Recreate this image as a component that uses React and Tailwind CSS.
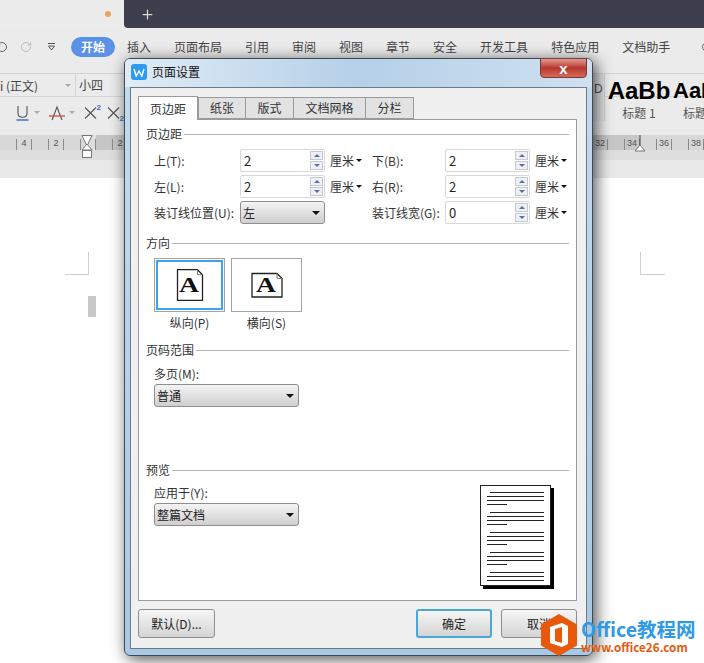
import { Plus, RotateCcw, RotateCw } from 'lucide-react'

const menus = ['插入', '页面布局', '引用', '审阅', '视图', '章节', '安全', '开发工具', '特色应用', '文档助手']

// one cell every 32px along the ruler, 16px to 704
const rulerLabels = ['4', '2', '', '2', '', '', '', '', '', '', '', '', '', '', '', '', '', '', '32', '34', '36', '38']

function Spinner({ value }) {
    return (
        <div className="flex h-[23px] w-[85px] items-center justify-between rounded-[2px] border border-[#d8d8d8] bg-white pl-[3px] pr-[1px] text-[13px] text-[#222]">
            <span>{value}</span>
            <div className="flex flex-col gap-px">
                <div className="flex h-[9px] w-[13px] items-center justify-center border border-[#c4c8d0] bg-[#eef0f4]">
                    <div className="h-0 w-0 border-x-[3px] border-b-[3px] border-x-transparent border-b-[#5a6ea8]" />
                </div>
                <div className="flex h-[9px] w-[13px] items-center justify-center border border-[#c4c8d0] bg-[#eef0f4]">
                    <div className="h-0 w-0 border-x-[3px] border-t-[3px] border-x-transparent border-t-[#5a6ea8]" />
                </div>
            </div>
        </div>
    )
}

function Unit() {
    return (
        <div className="ml-[5px] flex items-center gap-[2px] text-[12px] text-[#333]">
            厘米
            <div className="h-0 w-0 border-x-[3px] border-t-[3px] border-x-transparent border-t-[#111]" />
        </div>
    )
}

function Select({ label, width }) {
    return (
        <div className={`flex h-[23px] ${width} items-center justify-between rounded-[3px] border border-[#8e8e8e] bg-gradient-to-b from-[#f4f4f4] to-[#cfcfcf] pl-[2px] pr-[4px] text-[12px] text-[#222]`}>
            {label}
            <div className="h-0 w-0 border-x-[4px] border-t-[4px] border-x-transparent border-t-[#111]" />
        </div>
    )
}

function Group({ title, className }) {
    return (
        <div className={`flex items-center gap-[2px] text-[12px] leading-[14px] text-[#333] ${className}`}>
            {title}
            <div className="h-px flex-1 bg-[#b4b4b4]" />
        </div>
    )
}

function FormLabel({ children, className }) {
    return <div className={`whitespace-nowrap text-[12px] leading-[14px] text-[#333] ${className}`}>{children}</div>
}

function PageGlyph({ landscape }) {
    return (
        <svg width="32" height="32" viewBox="0 0 32 32" className="block">
            {landscape ? (
                <path d="M1 4.5H26L31 9.5V28H1Z" fill="#fff" stroke="#222" strokeWidth="1.3" />
            ) : (
                <path d="M3.5 0.7H23.5L28.5 5.7V31.3H3.5Z" fill="#fff" stroke="#222" strokeWidth="1.3" />
            )}
            <path d={landscape ? 'M26 4.5V9.5H31' : 'M23.5 0.7V5.7H28.5'} fill="none" stroke="#777" />
            <text
                x="15"
                y="23"
                textAnchor="middle"
                fontSize="20"
                fontWeight="700"
                fontFamily="Liberation Serif, serif"
                fill="#111"
                textLength="20"
                lengthAdjust="spacingAndGlyphs"
            >
                A
            </text>
        </svg>
    )
}

function PreviewPage() {
    const lines = [
        'ml-[3px]', '', '', 'w-[20px]', 'gap',
        'ml-[3px]', '', '', 'w-[20px]', 'gap',
        'ml-[3px]', '', '', 'w-[20px]', 'gap',
        'ml-[3px]', '', '', 'w-[20px]', 'gap',
        'ml-[3px]', '', '',
    ]
    return (
        <div className="flex h-[101px] w-[71px] flex-col gap-[3px] border border-[#222] bg-white px-[6px] pt-[6px] shadow-[3px_3px_0_#000]">
            {lines.map((l, i) =>
                l === 'gap' ? (
                    <div key={i} className="h-px" />
                ) : (
                    <div key={i} className={`h-px bg-[#222] ${l}`} />
                ),
            )}
        </div>
    )
}

function Ruler() {
    return (
        <div className="relative h-[25px] bg-[#dedede]">
            <div className="flex h-[15px]">
                <div className="w-[88px] bg-[#d8d8d8]" />
                <div className="w-[8px]" />
                <div className="w-[544px] bg-[#c6c6c6]" />
                <div className="flex-1 bg-[#d8d8d8]" />
            </div>
            <div className="absolute left-0 top-[4px] flex">
                {rulerLabels.map((label, i) => (
                    <div key={i} className="ml-[16px] h-[11px] w-[16px] shrink-0 border-x border-[#8a8a8a] text-center text-[9px] leading-[8px] text-[#555]" style={{ fontFamily: '"Liberation Sans", sans-serif' }}>
                        {label}
                    </div>
                ))}
            </div>
            {/* indent markers */}
            <svg width="12" height="24" viewBox="0 0 12 24" className="absolute left-[81px] top-0">
                <path d="M1 0.5H11L6 11Z" fill="#fff" stroke="#777" />
                <path d="M6 9L11 15H1Z" fill="#fff" stroke="#777" />
                <rect x="1.5" y="15.5" width="9" height="7" fill="#fff" stroke="#777" />
            </svg>
            <svg width="12" height="17" viewBox="0 0 12 17" className="absolute left-[634px] top-0">
                <path d="M6 0V10" stroke="#444" />
                <path d="M6 10L11 16H1Z" fill="#fff" stroke="#777" />
            </svg>
        </div>
    )
}

function ToolbarChevron() {
    return <div className="h-0 w-0 border-x-[3px] border-t-[3px] border-x-transparent border-t-[#aaa]" />
}

function ScriptIcon({ sub }) {
    return (
        <svg width="20" height="20" viewBox="0 0 20 20" className="block">
            <path d="M2 4.5L13 15.5M13 4.5L2 15.5" stroke="#555" strokeWidth="1.1" fill="none" />
            <text x="13.5" y={sub ? 18 : 7} fontSize="8" fontWeight="700" fontFamily="Liberation Sans, sans-serif" fill="#3b74c4">2</text>
        </svg>
    )
}

export default function App() {
    return (
        <div
            className="relative h-[663px] w-[704px] overflow-hidden bg-white"
            style={{ fontFamily: '"Noto Sans CJK SC", "Liberation Sans", sans-serif' }}
        >
            {/* Tab strip */}
            <div className="flex h-[28px]">
                <div className="flex w-[124px] items-center justify-end bg-[#ececec] pr-[13px]">
                    <div className="h-[6px] w-[6px] rounded-full bg-[#eda35a]" />
                </div>
                <div className="flex flex-1 items-center rounded-bl-[4px] bg-[#3e3f4e] pl-[16px] text-[#d8d8d8]">
                    <Plus size={15} strokeWidth={2} />
                </div>
            </div>

            {/* Ribbon menu */}
            <div className="relative flex h-[45px] items-center bg-[#ebebeb] pb-[7px] text-[12px] text-[#444]">
                <RotateCcw size={12} className="ml-[-4px] shrink-0 text-[#666]" />
                <RotateCw size={12} className="ml-[12px] shrink-0 text-[#bbb]" />
                <svg width="9" height="8" viewBox="0 0 9 8" className="ml-[15px] block shrink-0">
                    <path d="M1 0.5H8M1.5 3L4.5 7L7.5 3Z" fill="none" stroke="#555" />
                </svg>
                <div className="ml-[15px] flex h-[20px] w-[44px] shrink-0 items-center justify-center rounded-full bg-[#5b92e5] font-bold text-white">开始</div>
                <div className="ml-[12px] flex shrink-0 gap-[23px] whitespace-nowrap">
                    {menus.map((m) => (
                        <div key={m}>{m}</div>
                    ))}
                </div>
                <div className="ml-[32px] h-[10px] w-[10px] shrink-0 rounded-full border border-[#666]" />
            </div>

            {/* Toolbar */}
            <div className="relative h-[62px] border-t border-[#d4d4d4] bg-[#ebebeb] text-[#444]">
                <div className="flex h-[23px] items-center border-b border-[#d4d4d4] text-[12px]">
                    <div className="flex w-[76px] items-center justify-between border-r border-[#d4d4d4] pr-[4px] leading-[23px]">
                        i (正文)
                        <ToolbarChevron />
                    </div>
                    <div className="pl-[3px]">小四</div>
                </div>
                <div className="flex h-[31px] items-center pl-[16px]">
                    <svg width="13" height="16" viewBox="0 0 13 16" className="block">
                        <path d="M2 1V8.5C2 11 4 12.2 6.5 12.2C9 12.2 11 11 11 8.5V1" fill="none" stroke="#555" strokeWidth="1.1" />
                        <path d="M0.5 15H12.5" stroke="#3b74c4" strokeWidth="1.5" />
                    </svg>
                    <div className="ml-[5px]"><ToolbarChevron /></div>
                    <svg width="16" height="16" viewBox="0 0 16 16" className="ml-[9px] block">
                        <path d="M3 15L8 2L13 15" fill="none" stroke="#555" strokeWidth="1.1" />
                        <path d="M0 11H16" stroke="#d64a4a" strokeWidth="1.3" />
                    </svg>
                    <div className="ml-[4px]"><ToolbarChevron /></div>
                    <div className="ml-[8px]"><ScriptIcon /></div>
                    <div className="ml-[3px]"><ScriptIcon sub /></div>
                </div>
                <div className="absolute left-[593px] top-0 flex h-[47px] items-start whitespace-nowrap text-[#000]" style={{ fontFamily: '"Liberation Sans", sans-serif' }}>
                    <div className="mr-[3px] h-[47px] w-[12px] border-r border-[#d0d0d0] bg-[#e4e4e4] pl-[1px] pt-[8px] text-[12px] leading-[14px] text-[#555]">D</div>
                    <div className="flex w-[62px] flex-col items-center pt-[4px]">
                        <span className="text-[24px] font-bold leading-[26px]">AaBb</span>
                        <span className="mt-[2px] text-[12px] leading-[14px] text-[#555]" style={{ fontFamily: '"Noto Sans CJK SC", sans-serif' }}>标题 1</span>
                    </div>
                    <div className="flex flex-col items-center pl-[3px] pt-[4px]">
                        <span className="text-[22px] font-bold leading-[26px]">AaB</span>
                        <span className="mt-[2px] text-[12px] leading-[14px] text-[#555]" style={{ fontFamily: '"Noto Sans CJK SC", sans-serif' }}>标题</span>
                    </div>
                </div>
            </div>

            <Ruler />

            {/* Gray gutter above the page */}
            <div className="h-[18px] bg-[#e8e8e8]" />

            {/* Page corner marks and cursor */}
            <div className="absolute left-[65px] top-[252px] h-[23px] w-[24px] border-b border-r border-[#d0d0d0]" />
            <div className="absolute left-[640px] top-[252px] h-[23px] w-[25px] border-b border-l border-[#d0d0d0]" />
            <div className="absolute left-[88px] top-[296px] h-[21px] w-[8px] bg-[#c8c8c8]" />

            {/* Dialog window */}
            <div className="absolute left-[124px] top-[58px] flex h-[598px] w-[469px] flex-col rounded-[6px] border border-[#3c4a58] bg-gradient-to-b from-[#c4dbee] to-[#a9c8e4] px-[5px] pb-[6px] shadow-[3px_3px_16px_rgba(0,0,0,0.7)]">
                <div className="relative mx-[-5px] flex h-[28px] items-center gap-[5px] rounded-t-[5px] bg-gradient-to-r from-[#e0ecf6] via-[#b5d0e8] to-[#cfe0f0] pb-[2px] pl-[6px] text-[12px] text-[#111]">
                    <div className="flex h-[16px] w-[16px] items-center justify-center rounded-[3px] bg-[#2f9bf0]">
                        <svg width="12" height="9" viewBox="0 0 12 9">
                            <path d="M1 1L3.2 8L6 3L8.8 8L11 1" fill="none" stroke="#fff" strokeWidth="1.4" />
                        </svg>
                    </div>
                    页面设置
                    <div className="absolute right-[5px] top-[-1px] flex h-[20px] w-[47px] items-center justify-center rounded-b-[4px] border border-[#7c3a36] bg-gradient-to-b from-[#dc9a90] via-[#b8352a] to-[#d46a5c] text-[15px] font-bold leading-none text-white" style={{ fontFamily: '"Liberation Sans", sans-serif' }}>x</div>
                </div>

                <div className="flex flex-1 flex-col border border-[#6e7a86] bg-[#f0f0f0] pl-[7px] pr-[9px]">
                    {/* Tabs */}
                    <div className="mt-[7px] flex h-[24px] items-end text-[12px] text-[#333]">
                        <div className="z-10 mb-[-1px] flex h-[24px] w-[60px] items-center justify-center border border-b-0 border-[#9a9a9a] bg-white">页边距</div>
                        <div className="flex h-[22px] w-[48px] items-center justify-center border border-[#9a9a9a] bg-[#e2e2e2]">纸张</div>
                        <div className="flex h-[22px] w-[48px] items-center justify-center border border-l-0 border-[#9a9a9a] bg-[#e2e2e2]">版式</div>
                        <div className="flex h-[22px] w-[72px] items-center justify-center border border-l-0 border-[#9a9a9a] bg-[#e2e2e2]">文档网格</div>
                        <div className="flex h-[22px] w-[48px] items-center justify-center border border-l-0 border-[#9a9a9a] bg-[#e2e2e2]">分栏</div>
                    </div>

                    {/* Tab panel */}
                    <div className="flex h-[482px] flex-col border border-[#9a9a9a] bg-white px-[7px]">
                        <Group title="页边距" className="mt-[7px]" />

                        <div className="mt-[8px] grid grid-cols-[94px_85px_47px_73px_85px_auto] items-center gap-y-[3px]">
                            <FormLabel className="pl-[8px]">上(T):</FormLabel>
                            <Spinner value="2" />
                            <Unit />
                            <FormLabel>下(B):</FormLabel>
                            <Spinner value="2" />
                            <Unit />

                            <FormLabel className="pl-[8px]">左(L):</FormLabel>
                            <Spinner value="2" />
                            <Unit />
                            <FormLabel>右(R):</FormLabel>
                            <Spinner value="2" />
                            <Unit />

                            <FormLabel className="pl-[8px]">装订线位置(U):</FormLabel>
                            <Select label="左" width="w-[85px]" />
                            <div />
                            <FormLabel>装订线宽(G):</FormLabel>
                            <Spinner value="0" />
                            <Unit />
                        </div>

                        <Group title="方向" className="mt-[12px]" />

                        <div className="mt-[8px] flex gap-[6px] pl-[8px]">
                            <div className="flex flex-col items-center">
                                <div className="h-[54px] w-[71px] border border-[#a4a4a4] bg-white p-px">
                                    <div className="flex h-full w-full items-center justify-center border-2 border-[#3ba3f5]">
                                        <PageGlyph />
                                    </div>
                                </div>
                                <div className="mt-[4px] text-[12px] leading-[14px] text-[#333]">纵向(P)</div>
                            </div>
                            <div className="flex flex-col items-center">
                                <div className="flex h-[54px] w-[71px] items-center justify-center border border-[#a4a4a4] bg-white">
                                    <PageGlyph landscape />
                                </div>
                                <div className="mt-[4px] text-[12px] leading-[14px] text-[#333]">横向(S)</div>
                            </div>
                        </div>

                        <Group title="页码范围" className="mt-[13px]" />
                        <FormLabel className="mt-[10px] pl-[8px]">多页(M):</FormLabel>
                        <div className="mt-[3px] pl-[8px]">
                            <Select label="普通" width="w-[145px]" />
                        </div>

                        <Group title="预览" className="mt-[56px]" />
                        <div className="flex justify-between">
                            <div className="pl-[8px] pt-[9px]">
                                <FormLabel>应用于(Y):</FormLabel>
                                <div className="mt-[3px]">
                                    <Select label="整篇文档" width="w-[145px]" />
                                </div>
                            </div>
                            <div className="mr-[18px] mt-[8px]">
                                <PreviewPage />
                            </div>
                        </div>
                    </div>

                    {/* Buttons */}
                    <div className="mt-[8px] flex items-center text-[12px] text-[#222]">
                        <div className="flex h-[29px] w-[77px] items-center justify-center rounded-[3px] border border-[#8e8e8e] bg-gradient-to-b from-[#f6f6f6] to-[#d4d4d4]">默认(D)...</div>
                        <div className="ml-[201px] flex h-[29px] w-[76px] items-center justify-center rounded-[3px] border-2 border-[#4aa8d8] bg-gradient-to-b from-[#f6f6f6] to-[#d4d4d4]">确定</div>
                        <div className="ml-[9px] flex h-[29px] w-[76px] items-center justify-center rounded-[3px] border border-[#8e8e8e] bg-gradient-to-b from-[#f6f6f6] to-[#d4d4d4]">取消</div>
                    </div>
                </div>
            </div>

            {/* Watermark */}
            <div className="absolute left-[541px] top-[614px] flex items-center gap-[4px]">
                <svg width="36" height="42" viewBox="0 0 36 42">
                    <path d="M18 0L36 10.5V31.5L18 42L0 31.5V10.5Z" fill="#e8590c" />
                    <path d="M21 9L9 13V29L21 33L27 30V12ZM21 13V29L14 27V15Z" fill="#fff" />
                </svg>
                <div className="flex flex-col whitespace-nowrap">
                    <span className="text-[19.5px] font-bold leading-[22px] text-[#2f9be8]">Office教程网</span>
                    <span className="text-[11.7px] font-bold leading-[13px] text-[#e8590c]">www.office26.com</span>
                </div>
            </div>
        </div>
    )
}
